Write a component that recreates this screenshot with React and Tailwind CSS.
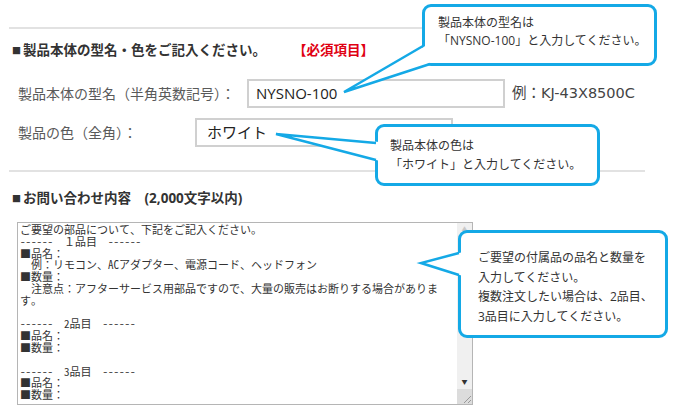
import React from 'react';

const jp = { fontFamily: '"Open Sans", "Noto Sans CJK JP", sans-serif' };
const wide = { fontFamily: '"DejaVu Sans", "Noto Sans CJK JP", sans-serif' };
const mono = { fontFamily: '"Noto Sans Mono CJK JP", "Noto Sans CJK JP", monospace' };

const memoLines = [
  'ご要望の部品について、下記をご記入ください。',
  '------　１品目　------',
  '■品名：',
  '　例：リモコン、ACアダプター、電源コード、ヘッドフォン',
  '■数量：',
  '　注意点：アフターサービス用部品ですので、大量の販売はお断りする場合がありま',
  'す。',
  '',
  '------　2品目　------',
  '■品名：',
  '■数量：',
  '',
  '------　3品目　------',
  '■品名：',
  '■数量：',
];

const Callout = ({ className, children }) => (
  <div
    className={`absolute bg-white border-[3px] border-[#14a9e6] rounded-[9px] text-[12px] text-[#333] ${className}`}
  >
    {children}
  </div>
);

const Heading = ({ children }) => (
  <div className="flex items-center pl-[12px] h-[20px] text-[13.5px] font-bold text-[#333]">
    <span className="text-[9px] mr-[2px] leading-none">■</span>
    {children}
  </div>
);

const Field = ({ value, className }) => (
  <div className={`h-[29px] border-2 border-[#d0d0d0] bg-white flex items-center pl-[7px] text-[#222] ${className}`}>
    {value}
  </div>
);

export default function App() {
  return (
    <div className="relative w-[680px] h-[413px] bg-white overflow-hidden" style={jp}>
      {/* form */}
      <div className="pt-[27px]">
        <div className="ml-[9px] w-[636px] h-[2px] bg-[#e2e2e2]" />

        <div className="mt-[11px]">
          <Heading>
            製品本体の型名・色をご記入ください。
            <span className="ml-[27px] text-[#e00012]">【必須項目】</span>
          </Heading>
        </div>

        <div className="mt-[19px] flex items-center pl-[18px] text-[14px] text-[#5a5a5a]">
          <span className="w-[229px] whitespace-nowrap">製品本体の型名（半角英数記号）：</span>
          <Field value="NYSNO-100" className="w-[258px] text-[15px]" />
          <span className="ml-[7px] text-[14.5px] text-[#444] whitespace-nowrap" style={wide}>例：KJ-43X8500C</span>
        </div>

        <div className="mt-[10px] flex items-center pl-[18px] text-[14px] text-[#5a5a5a]">
          <span className="w-[177px] whitespace-nowrap">製品の色（全角）：</span>
          <Field value="ホワイト" className="w-[258px] pl-[10px] text-[15px]" />
        </div>

        <div className="mt-[23px] ml-[9px] w-[636px] h-[2px] bg-[#e2e2e2]" />

        <div className="mt-[16px]">
          <Heading>
            お問い合わせ内容　(2,000文字以内)
          </Heading>
        </div>

        <div className="mt-[14px] ml-[17px] w-[456px] h-[183px] border border-[#b5b5b5] flex bg-white">
          <div className="flex-1 pl-[2px] pt-[1px] text-[11px] leading-[11.8px] text-[#333] whitespace-pre" style={mono}>
            {memoLines.map((l, i) => (
              <div key={i} className="h-[11.8px]">{l}</div>
            ))}
          </div>
          <div className="w-[15px] bg-[#f0f0f0] flex flex-col items-center">
            <div className="h-[13px] flex items-center text-[6px] text-[#c8c8c8]">▲</div>
            <div className="flex-1" />
            <div className="h-[13px] flex items-center text-[6px] text-[#333]">▼</div>
            <div className="h-[15px] w-full bg-[#dcdcdc] relative">
              <svg className="absolute right-0 bottom-0" width="12" height="12" viewBox="0 0 12 12">
                <path d="M11 4 L4 11 M11 8 L8 11" stroke="#999" strokeWidth="1" />
              </svg>
            </div>
          </div>
        </div>
      </div>

      {/* callouts */}
      <Callout className="left-[422px] top-[4px] w-[235px] h-[62px] pl-[13px] pt-[7px] leading-[18px]">
        <div>製品本体の型名は</div>
        <div>「NYSNO-100」と入力してください。</div>
      </Callout>

      <Callout className="left-[375px] top-[124px] w-[225px] h-[62px] pl-[12px] pt-[9px] leading-[19px]">
        <div>製品本体の色は</div>
        <div>「ホワイト」と入力してください。</div>
      </Callout>

      <Callout className="left-[458px] top-[230px] w-[210px] h-[108px] pl-[17px] pt-[15px] leading-[19.5px]">
        <div>ご要望の付属品の品名と数量を</div>
        <div>入力してください。</div>
        <div>複数注文したい場合は、2品目、</div>
        <div>3品目に入力してください。</div>
      </Callout>

      {/* callout tails */}
      <svg className="absolute inset-0 pointer-events-none" width="680" height="413">
        <polygon points="427,45 344,92 433,62" fill="white" />
        <polyline points="423,46 344,92 430,64" fill="none" stroke="#14a9e6" strokeWidth="2.5" strokeLinejoin="miter" />

        <polygon points="380,142 276,134 380,161" fill="white" />
        <polyline points="376,143 276,134 376,160" fill="none" stroke="#14a9e6" strokeWidth="2.5" />

        <polygon points="463,252 421,263 463,276" fill="white" />
        <polyline points="459,253 421,263 459,275" fill="none" stroke="#14a9e6" strokeWidth="2.5" />
      </svg>
    </div>
  );
}
